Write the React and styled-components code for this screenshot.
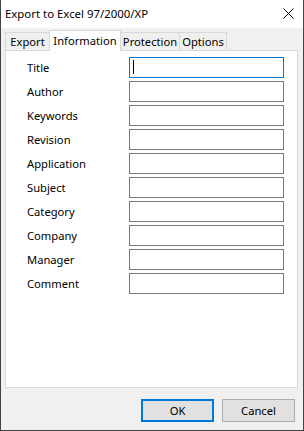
import React from 'react'
import styled, { createGlobalStyle } from 'styled-components'

const fields = [
  'Title',
  'Author',
  'Keywords',
  'Revision',
  'Application',
  'Subject',
  'Category',
  'Company',
  'Manager',
  'Comment',
]

const tabs = [
  { label: 'Export', width: 45 },
  { label: 'Information', width: 72, active: true },
  { label: 'Protection', width: 60 },
  { label: 'Options', width: 48 },
]

const CloseIcon = () => (
  <svg width="11" height="11" viewBox="0 0 11 11">
    <path d="M0.5 0.5 L10.5 10.5 M10.5 0.5 L0.5 10.5" stroke="#000" strokeWidth="1" fill="none" />
  </svg>
)

const App = () => {
  return (
    <>
      <GlobalStyle />
      <Window>
        <TitleBar>
          <TitleText>Export to Excel 97/2000/XP</TitleText>
          <CloseButton>
            <CloseIcon />
          </CloseButton>
        </TitleBar>
        <TabStrip>
          {tabs.map((t) => (
            <Tab key={t.label} $active={t.active} $width={t.width}>
              {t.label}
            </Tab>
          ))}
        </TabStrip>
        <Panel>
          <FieldGrid>
            {fields.map((f, i) => (
              <React.Fragment key={f}>
                <Label>{f}</Label>
                <Field $focused={i === 0} />
              </React.Fragment>
            ))}
          </FieldGrid>
        </Panel>
        <Footer>
          <Button $default>OK</Button>
          <Button>Cancel</Button>
        </Footer>
      </Window>
    </>
  )
}

const GlobalStyle = createGlobalStyle`
  body {
    margin: 0;
    font-family: "Noto Sans", "Open Sans", sans-serif;
    font-size: 11.2px;
    color: #000;
  }
  * {
    box-sizing: border-box;
  }
`
const Window = styled.div`
  width: 304px;
  height: 431px;
  background: #f0f0f0;
  border: 1px solid #434343;
  border-top: none;
  display: flex;
  flex-direction: column;
`
const TitleBar = styled.div`
  height: 28px;
  background: #ffffff;
  display: flex;
  align-items: center;
  justify-content: space-between;
  padding-left: 4px;
`
const TitleText = styled.span`
  font-size: 11.4px;
  margin-top: -1px;
`
const CloseButton = styled.div`
  display: flex;
  align-items: center;
  margin-right: 9px;
  margin-top: -1px;
`
const TabStrip = styled.div`
  display: flex;
  align-items: flex-end;
  height: 20px;
  margin-top: 2px;
  padding-left: 4px;
  position: relative;
  z-index: 1;
`
const Tab = styled.div`
  width: ${({ $width }) => $width}px;
  height: ${({ $active }) => ($active ? 21 : 18)}px;
  margin-bottom: ${({ $active }) => ($active ? -1 : 0)}px;
  margin-left: -1px;
  &:first-child {
    margin-left: 0;
  }
  background: ${({ $active }) => ($active ? '#ffffff' : '#f0f0f0')};
  border: 1px solid #d9d9d9;
  border-bottom: none;
  display: flex;
  align-items: center;
  justify-content: center;
  padding-bottom: ${({ $active }) => ($active ? 2 : 0)}px;
  position: relative;
  z-index: ${({ $active }) => ($active ? 2 : 1)};
  white-space: nowrap;
`
const Panel = styled.div`
  width: 293px;
  height: 338px;
  margin-left: 4px;
  background: #ffffff;
  border: 1px solid #d9d9d9;
  padding: 6px 0 0 21px;
`
const FieldGrid = styled.div`
  display: grid;
  grid-template-columns: 102px 155px;
  grid-auto-rows: 21px;
  row-gap: 3px;
`
const Label = styled.div`
  display: flex;
  align-items: center;
  padding-bottom: 1px;
`
const Field = styled.div`
  border: 1px solid ${({ $focused }) => ($focused ? '#0078d7' : '#7a7a7a')};
  background: #ffffff;
  position: relative;
  ${({ $focused }) =>
    $focused &&
    `
    &::before {
      content: '';
      position: absolute;
      left: 3px;
      top: 2px;
      width: 1px;
      height: 14px;
      background: #000;
    }
  `}
`
const Footer = styled.div`
  display: flex;
  justify-content: flex-end;
  gap: 8px;
  padding: 11px 8px 0 0;
`
const Button = styled.div`
  width: 73px;
  height: 23px;
  background: #e1e1e1;
  border: ${({ $default }) => ($default ? '2px solid #0078d7' : '1px solid #adadad')};
  display: flex;
  align-items: center;
  justify-content: center;
  padding-bottom: 1px;
`

export default App
